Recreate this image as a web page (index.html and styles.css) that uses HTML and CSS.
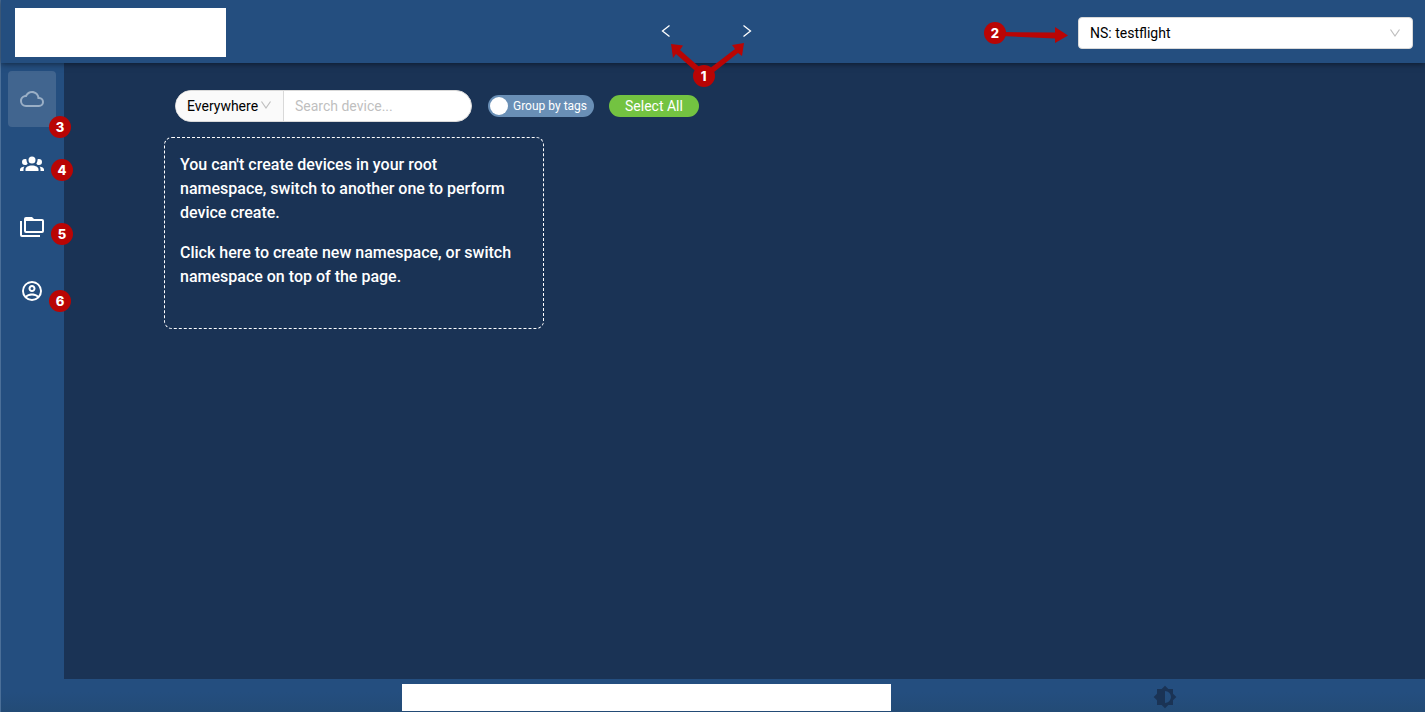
FILE: index.html
```html
<!DOCTYPE html>
<html lang="en">
<head>
<meta charset="utf-8">
<meta name="viewport" content="width=device-width, initial-scale=1">
<title>Devices</title>
<link rel="stylesheet" href="styles.css">
</head>
<body>
<div class="app">
  <header class="topbar">
    <div class="logo"></div>
    <div class="pager">
      <button class="pager-btn" type="button" aria-label="Previous">
        <svg width="12" height="14" viewBox="0 0 12 14"><path d="M9.500 1.500 2.500 7l7 5.500"/></svg>
      </button>
      <button class="pager-btn" type="button" aria-label="Next">
        <svg width="12" height="14" viewBox="0 0 12 14"><path d="M2.500 1.500 9.500 7l-7 5.500"/></svg>
      </button>
      <svg class="pointer pointer-pager" width="80" height="36" viewBox="0 0 80 36" aria-hidden="true">
        <path d="M3 3 15 4.500 12 9 37 31 33 35 8 13 5 17Z"/>
        <path d="M76 2 64 4 67 8 37 31 41 35 70 12 74 15Z"/>
      </svg>
      <span class="badge badge-pager">1</span>
    </div>
    <div class="namespace">
      <svg class="pointer pointer-namespace" width="66" height="18" viewBox="0 0 66 18" aria-hidden="true">
        <path d="M0 7 53 7.500 53 2 66 10.500 53 18 53 13.500 0 11Z"/>
      </svg>
      <span class="badge badge-namespace">2</span>
      <select class="namespace-select" aria-label="Namespace">
        <option>NS: testflight</option>
      </select>
      <svg class="chevron chevron-namespace" width="12" height="10" viewBox="0 0 12 10" aria-hidden="true"><path d="M1.500 1.500 6 8l4.500-6.500"/></svg>
    </div>
  </header>

  <nav class="sidebar" aria-label="Main">
    <a class="nav-item nav-item-active" href="#devices" aria-label="Devices">
      <svg width="24" height="24" viewBox="0 0 24 24"><path d="M19,18H6A4,4 0 0,1 2,14A4,4 0 0,1 6,10H6.71C7.37,7.69 9.5,6 12,6A5.5,5.5 0 0,1 17.5,11.5V12H19A3,3 0 0,1 22,15A3,3 0 0,1 19,18M19.35,10.03C18.67,6.59 15.64,4 12,4C9.11,4 6.6,5.64 5.35,8.03C2.34,8.36 0,10.9 0,14A6,6 0 0,0 6,20H19A5,5 0 0,0 24,15C24,12.36 21.95,10.22 19.35,10.03Z"/></svg>
      <span class="badge badge-devices">3</span>
    </a>
    <a class="nav-item" href="#groups" aria-label="Groups">
      <svg width="24" height="24" viewBox="0 0 24 24"><path d="M12,5.5A3.5,3.5 0 0,1 15.5,9A3.5,3.5 0 0,1 12,12.5A3.5,3.5 0 0,1 8.5,9A3.5,3.5 0 0,1 12,5.5M5,8C5.56,8 6.08,8.15 6.53,8.42C6.38,9.85 6.8,11.27 7.66,12.38C7.16,13.34 6.16,14 5,14A3,3 0 0,1 2,11A3,3 0 0,1 5,8M19,8A3,3 0 0,1 22,11A3,3 0 0,1 19,14C17.84,14 16.84,13.34 16.34,12.38C17.2,11.27 17.62,9.85 17.47,8.42C17.92,8.15 18.44,8 19,8M5.5,18.25C5.5,16.18 8.41,14.5 12,14.5C15.59,14.5 18.5,16.18 18.5,18.25V20H5.5V18.25M0,20V18.5C0,17.11 1.89,15.94 4.45,15.6C3.86,16.28 3.5,17.22 3.5,18.25V20H0M24,20H20.5V18.25C20.5,17.22 20.14,16.28 19.55,15.6C22.11,15.94 24,17.11 24,18.5V20Z"/></svg>
      <span class="badge badge-groups">4</span>
    </a>
    <a class="nav-item" href="#namespaces" aria-label="Namespaces">
      <svg width="24" height="24" viewBox="0 0 24 24"><path d="M22,4A2,2 0 0,1 24,6V16A2,2 0 0,1 22,18H6A2,2 0 0,1 4,16V4A2,2 0 0,1 6,2H12L14,4H22M2,6V20H20V22H2A2,2 0 0,1 0,20V11H0V6H2M6,6V16H22V6H6Z"/></svg>
      <span class="badge badge-groups">5</span>
    </a>
    <a class="nav-item" href="#account" aria-label="Account">
      <svg width="24" height="24" viewBox="0 0 24 24"><path d="M12,2A10,10 0 0,0 2,12A10,10 0 0,0 12,22A10,10 0 0,0 22,12A10,10 0 0,0 12,2M7.07,18.28C7.5,17.38 10.12,16.5 12,16.5C13.88,16.5 16.5,17.38 16.93,18.28C15.57,19.36 13.86,20 12,20C10.14,20 8.43,19.36 7.07,18.28M18.36,16.83C16.93,15.09 13.46,14.5 12,14.5C10.54,14.5 7.07,15.09 5.64,16.83C4.62,15.5 4,13.82 4,12C4,7.59 7.59,4 12,4C16.41,4 20,7.59 20,12C20,13.82 19.38,15.5 18.36,16.83M12,6C10.06,6 8.5,7.56 8.5,9.5C8.5,11.44 10.06,13 12,13C13.94,13 15.5,11.44 15.5,9.5C15.5,7.56 13.94,6 12,6M12,11A1.5,1.5 0 0,1 10.5,9.5A1.5,1.5 0 0,1 12,8A1.5,1.5 0 0,1 13.5,9.5A1.5,1.5 0 0,1 12,11Z"/></svg>
      <span class="badge badge-account">6</span>
    </a>
  </nav>

  <main class="content">
    <form class="toolbar">
      <div class="search">
        <div class="scope">
          <select class="scope-select" aria-label="Search scope">
            <option>Everywhere</option>
          </select>
          <svg class="chevron chevron-scope" width="12" height="10" viewBox="0 0 12 10" aria-hidden="true"><path d="M1.500 1.500 6 8l4.500-6.500"/></svg>
        </div>
        <input class="search-input" type="text" placeholder="Search device..." aria-label="Search device">
      </div>
      <label class="switch">
        <input class="switch-knob" type="checkbox">
        <span>Group by tags</span>
      </label>
      <button class="select-all" type="button">Select All</button>
    </form>
    <a class="notice" href="#new-namespace">
      <p>You can't create devices in your root namespace, switch to another one to perform device create.</p>
      <p>Click here to create new namespace, or switch namespace on top of the page.</p>
    </a>
  </main>

  <footer class="footer">
    <div class="footer-panel"></div>
    <button class="theme-btn" type="button" aria-label="Toggle theme">
      <svg width="24" height="24" viewBox="0 0 24 24"><path d="M12,18V6A6,6 0 0,1 18,12A6,6 0 0,1 12,18M20,15.31L23.31,12L20,8.69V4H15.31L12,0.69L8.69,4H4V8.69L0.69,12L4,15.31V20H8.69L12,23.31L15.31,20H20V15.31Z"/></svg>
    </button>
  </footer>
</div>
</body>
</html>
```
FILE: styles.css
```css
:root {
  --bar: #244e7f;
  --page: #1a3355;
  --mark: #b90504;
}

* {
  box-sizing: border-box;
}

body {
  margin: 0;
  font-family: Roboto, "Liberation Sans", sans-serif;
  font-size: 14px;
  line-height: 22px;
  color: #fff;
  background: var(--bar);
}

button,
input,
select {
  font: inherit;
}

.app {
  display: grid;
  grid-template: auto 1fr auto / 63px 1fr;
  min-height: 100vh;
  border-left: 1px solid #4b6f98;
}

.topbar {
  grid-column: 1 / -1;
  position: relative;
  z-index: 1;
  display: grid;
  grid-template-columns: 1fr auto 1fr;
  align-items: center;
  padding: 8px 12px 6px 0;
  background: var(--bar);
  box-shadow: 0 1px 6px rgba(0, 0, 0, 0.5);
}

.logo {
  width: 211px;
  height: 49px;
  margin-left: 14px;
  background: #fff;
}

.pager {
  position: relative;
  display: flex;
  gap: 57px;
  margin-right: 2px;
  padding-bottom: 3px;
}

.pager-btn {
  display: flex;
  align-items: center;
  justify-content: center;
  width: 24px;
  height: 32px;
  padding: 0;
  border: 0;
  background: none;
}

.pager-btn path {
  fill: none;
  stroke: #fff;
  stroke-width: 1.3;
}

.pointer {
  position: absolute;
  fill: var(--mark);
}

.pointer-pager {
  left: 14px;
  top: 26px;
}

.pointer-namespace {
  right: 345px;
  top: 8px;
}

.badge {
  position: absolute;
  width: 22px;
  height: 22px;
  border-radius: 50%;
  background: var(--mark);
  color: #fff;
  font: 800 13px/22px Inter, sans-serif;
  text-align: center;
}

.badge-pager {
  left: 39px;
  top: 50px;
}

.badge-namespace {
  right: 407px;
  top: 5px;
}

.badge-devices,
.badge-account {
  left: 41px;
}

.badge-devices {
  top: 45px;
}

.badge-account {
  top: 27px;
}

.badge-groups {
  left: 43px;
  top: 24px;
}

.namespace {
  position: relative;
  justify-self: end;
}

.namespace-select {
  appearance: none;
  display: block;
  width: 335px;
  height: 32px;
  padding: 0 32px 0 11px;
  border: 1px solid #d9d9d9;
  border-radius: 4px;
  background: #fff;
  color: #000;
}

.chevron {
  position: absolute;
  pointer-events: none;
  fill: none;
  stroke: #bfbfbf;
  stroke-width: 1.2;
}

.chevron-namespace {
  right: 12px;
  top: 11px;
}

.sidebar {
  position: relative;
  display: flex;
  flex-direction: column;
  gap: 8px;
  padding: 8px 8px 8px 7px;
}

.nav-item {
  position: relative;
  display: flex;
  align-items: center;
  justify-content: center;
  width: 48px;
  height: 56px;
  border-radius: 4px;
  text-decoration: none;
}

.nav-item svg {
  fill: #fff;
}

.nav-item-active {
  background: #41658f;
}

.nav-item-active svg {
  fill: #9aafc6;
}

.content {
  display: flex;
  flex-direction: column;
  align-items: flex-start;
  gap: 15px;
  padding: 27px 100px;
  background: var(--page);
}

.toolbar {
  display: flex;
  align-items: center;
  margin-left: 11px;
}

.search {
  display: flex;
  width: 297px;
  height: 32px;
  margin-right: 16px;
  border: 1px solid #d9d9d9;
  border-radius: 16px;
  background: #fff;
  overflow: hidden;
}

.scope {
  position: relative;
  flex: none;
  width: 108px;
  border-right: 1px solid #d9d9d9;
  background: #fafafa;
}

.scope-select {
  appearance: none;
  width: 100%;
  height: 100%;
  padding: 0 11px;
  border: 0;
  background: none;
  color: #000;
}

.chevron-scope {
  right: 11px;
  top: 9px;
}

.search-input {
  flex: 1;
  min-width: 0;
  padding: 0 11px;
  border: 0;
  background: none;
  color: #000;
}

.search-input::placeholder {
  color: #bfbfbf;
}

.switch {
  display: flex;
  align-items: center;
  gap: 5px;
  height: 22px;
  margin-right: 15px;
  padding: 0 7px 0 2px;
  border-radius: 11px;
  background: #698fb6;
  font-size: 12px;
}

.switch-knob {
  appearance: none;
  width: 18px;
  height: 18px;
  margin: 0;
  border-radius: 50%;
  background: #fff;
}

.select-all {
  height: 22px;
  padding: 0 16px;
  border: 0;
  border-radius: 11px;
  background: #73c341;
  color: #fff;
}

.notice {
  width: 380px;
  min-height: 192px;
  padding: 15px 24px 15px 15px;
  border: 1px dashed #fff;
  border-radius: 8px;
  color: #fff;
  font-size: 16px;
  font-weight: 500;
  line-height: 24px;
  text-decoration: none;
}

.notice p {
  margin: 0 0 16px;
}

.footer {
  grid-column: 1 / -1;
  display: grid;
  grid-template-columns: 401fr 489fr 534fr;
  align-items: center;
  padding: 5px 0 1px;
  background: linear-gradient(#244e7f 40%, #234b76);
}

.footer-panel {
  grid-column: 2;
  height: 27px;
  background: #fff;
}

.theme-btn {
  display: flex;
  justify-self: center;
  margin-left: 14px;
  padding: 0 0 2px;
  border: 0;
  background: none;
}

.theme-btn svg {
  fill: var(--page);
}
```
